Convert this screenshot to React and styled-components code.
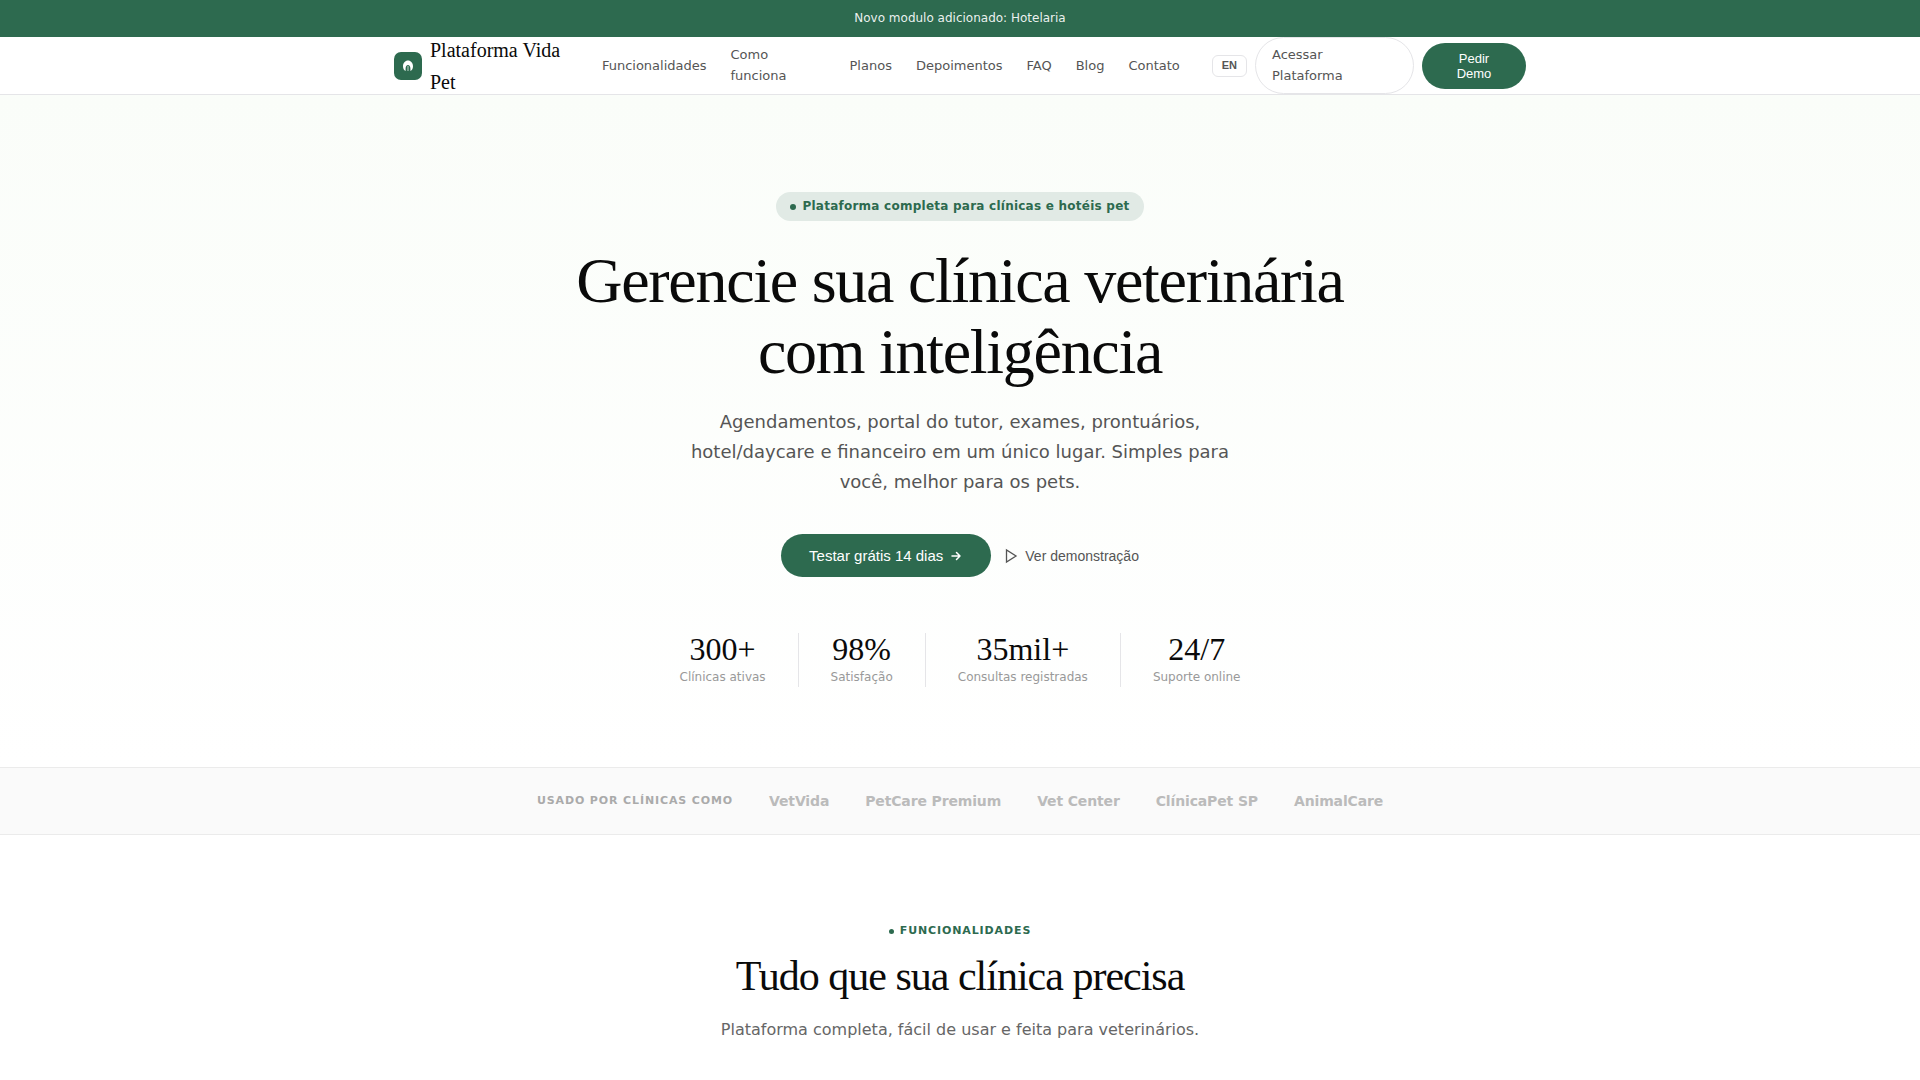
import React from "react";
import styled, { createGlobalStyle } from "styled-components";

const GREEN = "#2d6a4f";
const SANS = `"DejaVu Sans", sans-serif`;
const SERIF = `"Liberation Serif", serif`;
const UI = `"Liberation Sans", Arial, sans-serif`;

const GlobalStyle = createGlobalStyle`
  *, *::before, *::after { box-sizing: border-box; }
  html { overflow: hidden; }
  body {
    margin: 0;
    background: #fff;
    color: #0a0a0a;
    font-family: ${SANS};
    font-size: 16px;
    line-height: 26px;
  }
  h1, h2, p, ul, dl, dd { margin: 0; padding: 0; }
  a { color: inherit; text-decoration: none; }
  button { cursor: pointer; font-family: ${UI}; }
`;

const Banner = styled.div`
  padding: 9px 24px;
  background: ${GREEN};
  color: rgba(255, 255, 255, 0.92);
  font-size: 12px;
  line-height: 19px;
  text-align: center;
`;

const Header = styled.header`
  height: 58px;
  background: #fff;
  border-bottom: 1px solid #e5e5e8;
`;

const HeaderInner = styled.div`
  display: flex;
  align-items: center;
  justify-content: space-between;
  height: 100%;
  max-width: 1180px;
  margin: 0 auto;
  padding: 0 24px;
`;

const Brand = styled.a`
  display: flex;
  align-items: center;
  gap: 8px;
  color: #0a0a0a;
  font-family: ${SERIF};
  font-size: 20px;
  line-height: 32px;
`;

const BrandMark = styled.span`
  display: flex;
  align-items: center;
  justify-content: center;
  flex: none;
  width: 28px;
  height: 28px;
  border-radius: 7px;
  background: ${GREEN};
`;

const BrandName = styled.span`
  width: 140px;
`;

const NavList = styled.ul`
  display: flex;
  align-items: center;
  gap: 24px;
  padding-bottom: 1px;
  list-style: none;
`;

const NavItem = styled.li`
  width: ${(p) => (p.$wrap ? "95px" : "auto")};
  color: #555;
  font-size: 13px;
  line-height: 21px;
`;

const Actions = styled.div`
  display: flex;
  align-items: center;
  gap: 8px;
`;

const LangButton = styled.button`
  padding: 3px 9px 5px;
  border: 1px solid #e5e5e8;
  border-radius: 6px;
  background: #fff;
  color: #555;
  font-size: 11px;
  font-weight: 700;
  line-height: 12px;
`;

const AccessLink = styled.a`
  width: 159px;
  padding: 6px 16px 7px;
  border: 1px solid #e5e5e8;
  border-radius: 100px;
  color: #555;
  font-size: 13px;
  line-height: 21px;
`;

const DemoButton = styled.button`
  width: 104px;
  padding: 8px 20px;
  border: 0;
  border-radius: 100px;
  background: ${GREEN};
  color: #fff;
  font-size: 13px;
  line-height: 15px;
`;

const Hero = styled.section`
  display: flex;
  flex-direction: column;
  align-items: center;
  padding: 97px 24px 80px;
  background: linear-gradient(180deg, #fafdf9 0%, #fff 100%);
  text-align: center;
`;

const Badge = styled.div`
  display: flex;
  align-items: center;
  gap: 6px;
  padding: 5px 14px;
  border-radius: 100px;
  background: #e1eae5;
  color: ${GREEN};
  font-size: 12px;
  font-weight: 700;
  line-height: 19px;
  letter-spacing: 0.02em;
`;

const Dot = styled.span`
  width: ${(p) => p.$size}px;
  height: ${(p) => p.$size}px;
  border-radius: 50%;
  background: ${GREEN};
`;

const HeroTitle = styled.h1`
  max-width: 820px;
  margin-top: 24px;
  font-family: ${SERIF};
  font-size: 64px;
  font-weight: 400;
  line-height: 71px;
  letter-spacing: -0.02em;
`;

const HeroText = styled.p`
  max-width: 540px;
  margin-top: 20px;
  color: #555;
  font-size: 18px;
  line-height: 30px;
`;

const HeroActions = styled.div`
  display: flex;
  align-items: center;
  gap: 12px;
  margin-top: 37px;
`;

const PrimaryButton = styled.button`
  display: flex;
  align-items: center;
  gap: 6px;
  padding: 13px 28px;
  border: 0;
  border-radius: 100px;
  background: ${GREEN};
  color: #fff;
  font-size: 15px;
  line-height: 17px;
`;

const GhostButton = styled.button`
  display: flex;
  align-items: center;
  gap: 6px;
  padding: 0;
  border: 0;
  background: none;
  color: #555;
  font-size: 14px;
  line-height: 16px;
`;

const Stats = styled.dl`
  display: flex;
  margin-top: 56px;
`;

const Stat = styled.div`
  display: flex;
  flex-direction: column-reverse;
  padding: 0 32px;
  border-left: 1px solid #e5e5e8;

  &:first-child {
    border-left: 0;
  }
`;

const StatLabel = styled.dt`
  margin-top: 3px;
  color: #999;
  font-size: 12px;
  line-height: 19px;
`;

const StatValue = styled.dd`
  color: #0a0a0a;
  font-family: ${SERIF};
  font-size: 32px;
  line-height: 32px;
`;

const Clients = styled.section`
  display: flex;
  align-items: center;
  justify-content: center;
  gap: 36px;
  padding: 22px 24px;
  border-top: 1px solid #ebebeb;
  border-bottom: 1px solid #ebebeb;
  background: #fafafa;
`;

const ClientsLabel = styled.span`
  color: #aaa;
  font-size: 11px;
  font-weight: 700;
  line-height: 18px;
  letter-spacing: 0.08em;
  text-transform: uppercase;
`;

const ClientName = styled.span`
  color: #bbb;
  font-size: 14px;
  font-weight: 700;
  line-height: 22px;
  letter-spacing: -0.01em;
`;

const Features = styled.section`
  display: flex;
  flex-direction: column;
  align-items: center;
  padding: 87px 24px;
  text-align: center;
`;

const Eyebrow = styled.div`
  display: flex;
  align-items: center;
  gap: 6px;
  color: ${GREEN};
  font-size: 11px;
  font-weight: 700;
  line-height: 18px;
  letter-spacing: 0.08em;
  text-transform: uppercase;
`;

const SectionTitle = styled.h2`
  margin-top: 12px;
  font-family: ${SERIF};
  font-size: 42px;
  font-weight: 400;
  line-height: 48px;
  letter-spacing: -1px;
`;

const SectionText = styled.p`
  margin-top: 16px;
  color: #666;
  font-size: 16px;
  line-height: 27px;
`;

const NAV = [
  { label: "Funcionalidades", href: "#funcionalidades" },
  { label: "Como funciona", href: "#como-funciona", wrap: true },
  { label: "Planos", href: "#planos" },
  { label: "Depoimentos", href: "#depoimentos" },
  { label: "FAQ", href: "#faq" },
  { label: "Blog", href: "#blog" },
  { label: "Contato", href: "#contato" },
];

const STATS = [
  { value: "300+", label: "Clínicas ativas" },
  { value: "98%", label: "Satisfação" },
  { value: "35mil+", label: "Consultas registradas" },
  { value: "24/7", label: "Suporte online" },
];

const CLIENTS = ["VetVida", "PetCare Premium", "Vet Center", "ClínicaPet SP", "AnimalCare"];

function BrandIcon() {
  return (
    <svg width="14" height="14" viewBox="0 0 14 14" aria-hidden="true">
      <path d="M7 1.500C4.200 1.500 2 4 2 7.200c0 2.200 0.900 4 2.600 4.800V9.400C4.600 7.600 5.600 6 7 6s2.400 1.600 2.400 3.400V12C11.100 11.200 12 9.400 12 7.200c0-3.200-2.200-5.700-5-5.700z" fill="#fff" />
      <path d="M6.400 7h1.200v5H6.400z" fill="#fff" opacity="0.6" />
    </svg>
  );
}

function ArrowIcon() {
  return (
    <svg width="14" height="14" viewBox="0 0 14 14" fill="none" stroke="currentColor" strokeWidth="1.500" strokeLinecap="round" strokeLinejoin="round" aria-hidden="true">
      <path d="M3 7h8M7.500 3.500L11 7l-3.500 3.500" />
    </svg>
  );
}

function PlayIcon() {
  return (
    <svg width="16" height="16" viewBox="0 0 16 16" fill="none" stroke="currentColor" strokeWidth="1.300" aria-hidden="true">
      <path d="M3.500 2v12l9.500-6z" />
    </svg>
  );
}

export default function App() {
  return (
    <>
      <GlobalStyle />
      <Banner>Novo modulo adicionado: Hotelaria</Banner>
      <Header>
        <HeaderInner>
          <Brand href="#">
            <BrandMark>
              <BrandIcon />
            </BrandMark>
            <BrandName>Plataforma Vida Pet</BrandName>
          </Brand>
          <nav>
            <NavList>
              {NAV.map((item) => (
                <NavItem key={item.label} $wrap={item.wrap}>
                  <a href={item.href}>{item.label}</a>
                </NavItem>
              ))}
            </NavList>
          </nav>
          <Actions>
            <LangButton type="button">EN</LangButton>
            <AccessLink href="#acessar">Acessar Plataforma</AccessLink>
            <DemoButton type="button">Pedir Demo</DemoButton>
          </Actions>
        </HeaderInner>
      </Header>
      <main>
        <Hero>
          <Badge>
            <Dot $size={6} />
            Plataforma completa para clínicas e hotéis pet
          </Badge>
          <HeroTitle>Gerencie sua clínica veterinária com inteligência</HeroTitle>
          <HeroText>
            Agendamentos, portal do tutor, exames, prontuários, hotel/daycare e financeiro em um único
            lugar. Simples para você, melhor para os pets.
          </HeroText>
          <HeroActions>
            <PrimaryButton type="button">
              Testar grátis 14 dias
              <ArrowIcon />
            </PrimaryButton>
            <GhostButton type="button">
              <PlayIcon />
              Ver demonstração
            </GhostButton>
          </HeroActions>
          <Stats>
            {STATS.map((s) => (
              <Stat key={s.label}>
                <StatLabel>{s.label}</StatLabel>
                <StatValue>{s.value}</StatValue>
              </Stat>
            ))}
          </Stats>
        </Hero>
        <Clients>
          <ClientsLabel>Usado por clínicas como</ClientsLabel>
          {CLIENTS.map((name) => (
            <ClientName key={name}>{name}</ClientName>
          ))}
        </Clients>
        <Features id="funcionalidades">
          <Eyebrow>
            <Dot $size={5} />
            Funcionalidades
          </Eyebrow>
          <SectionTitle>Tudo que sua clínica precisa</SectionTitle>
          <SectionText>Plataforma completa, fácil de usar e feita para veterinários.</SectionText>
        </Features>
      </main>
    </>
  );
}
